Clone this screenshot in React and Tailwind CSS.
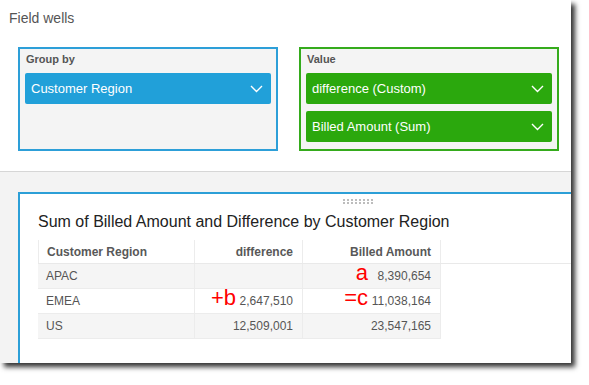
import React from "react";

const FONT = { fontFamily: '"Liberation Sans", Arial, sans-serif' };

function Chevron() {
  return (
    <svg width="13" height="8" viewBox="0 0 13 8" fill="none">
      <polyline points="1,1 6.5,6.5 12,1" stroke="#fff" strokeWidth="1.4" />
    </svg>
  );
}

function Pill({ label, color }) {
  return (
    <div className={`flex h-[31px] items-center justify-between rounded-[2px] pl-[6px] pr-[8px] text-[13px] text-white ${color}`}>
      <span>{label}</span>
      <Chevron />
    </div>
  );
}

function Well({ title, border, children }) {
  return (
    <div className={`flex h-[104px] w-[260px] flex-col border-2 bg-[#f4f4f4] px-[5px] pt-[4px] ${border}`}>
      <div className="h-[13px] pl-[1px] text-[11px] font-bold leading-[13px] text-[#555]">{title}</div>
      <div className="mt-[7px] flex flex-col gap-[7px]">{children}</div>
    </div>
  );
}

const ROWS = [
  { region: "APAC", diff: "", billed: "8,390,654", bg: "bg-[#f5f5f5]", noteC: "a" },
  { region: "EMEA", diff: "2,647,510", billed: "11,038,164", bg: "bg-white", noteB: "+b", noteC: "=c" },
  { region: "US", diff: "12,509,001", billed: "23,547,165", bg: "bg-[#f5f5f5]" },
];

function Note({ text, right }) {
  return (
    <span className={`absolute top-[-2px] text-[22px] leading-none text-[#ff0000] ${right}`}>{text}</span>
  );
}

export default function App() {
  return (
    <div className="h-[385px] w-[589px] overflow-hidden bg-white" style={FONT}>
      <div className="flex h-[363px] w-[571px] flex-col overflow-hidden bg-white shadow-[4px_4px_5px_rgba(0,0,0,0.8)]">
        {/* field wells */}
        <div className="h-[172px] shrink-0 border-b border-[#d6d6d6] pl-[9px] pt-[10px]">
          <div className="text-[14px] leading-[16px] text-[#555]">Field wells</div>
          <div className="ml-[9px] mt-[21px] flex gap-[21px]">
            <Well title="Group by" border="border-[#2d9fd8]">
              <Pill label="Customer Region" color="bg-[#21a0d9]" />
            </Well>
            <Well title="Value" border="border-[#35ab1c]">
              <Pill label="difference (Custom)" color="bg-[#2ba80d]" />
              <Pill label="Billed Amount (Sum)" color="bg-[#2ba80d]" />
            </Well>
          </div>
        </div>

        {/* visual */}
        <div className="flex-1 bg-[#f3f3f3] pl-[18px] pt-[20px]">
          <div className="h-[200px] w-[678px] border-l-2 border-t-2 border-[#2c9fd7] bg-white">
            <div className="mt-[5px] flex justify-center">
              <div className="grid grid-cols-8 gap-x-[2px] gap-y-[1px]">
                {Array.from({ length: 16 }).map((_, i) => (
                  <span key={i} className="h-[2px] w-[2px] bg-[#bdbdbd]" />
                ))}
              </div>
            </div>
            <div className="mt-[8px] pl-[18px] text-[16px] leading-[19px] text-[#222]">
              Sum of Billed Amount and Difference by Customer Region
            </div>
            <div className="mt-[9px] pl-[18px]">
              <div className="flex h-[24px] border-b border-[#e9e9e9] text-[12px] font-bold text-[#585858]">
                <div className="flex w-[157px] items-center border-x border-[#ececec] pl-[8px]">Customer Region</div>
                <div className="flex w-[108px] items-center justify-end border-r border-[#ececec] pr-[9px]">difference</div>
                <div className="flex w-[138px] items-center justify-end border-r border-[#ececec] pr-[9px]">Billed Amount</div>
              </div>
              {ROWS.map((r) => (
                <div key={r.region} className="flex h-[25px] text-[12px] text-[#555]">
                  <div className={`flex w-[157px] items-center border-b border-r border-[#ececec] pl-[8px] ${r.bg}`}>{r.region}</div>
                  <div className={`relative flex w-[108px] items-center justify-end border-b border-r border-[#ececec] pr-[9px] ${r.bg}`}>
                    {r.noteB && <Note text={r.noteB} right="right-[66px]" />}
                    {r.diff}
                  </div>
                  <div className={`relative flex w-[138px] items-center justify-end border-b border-r border-[#ececec] pr-[9px] ${r.bg}`}>
                    {r.noteC && <Note text={r.noteC} right="right-[72px]" />}
                    {r.billed}
                  </div>
                </div>
              ))}
            </div>
          </div>
        </div>
      </div>
    </div>
  );
}
